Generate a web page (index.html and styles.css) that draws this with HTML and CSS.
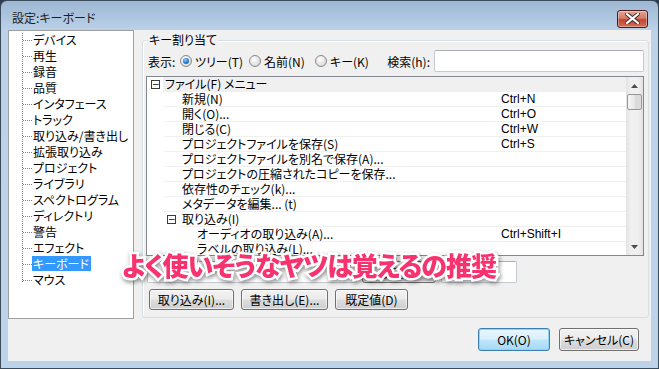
FILE: index.html
```html
<!DOCTYPE html>
<html lang="ja">
<head>
<meta charset="utf-8">
<title>設定:キーボード</title>
<link rel="stylesheet" href="styles.css">
</head>
<body>
<div class="window">
  <div class="titlebar">
    <span class="title">設定:キーボード</span>
    <div class="close">
      <svg width="15" height="11" viewBox="0 0 15 11"><path d="M2 1 L13 10 M13 1 L2 10" stroke="#3a2a2a" stroke-width="4" stroke-linecap="square"/><path d="M2 1 L13 10 M13 1 L2 10" stroke="#ffffff" stroke-width="2.2" stroke-linecap="square"/></svg>
    </div>
  </div>
  <div class="client">
    <div class="main">
      <div class="tree">
        <ul class="tree-list">
          <li>デバイス</li>
          <li>再生</li>
          <li>録音</li>
          <li>品質</li>
          <li>インタフェース</li>
          <li>トラック</li>
          <li>取り込み/書き出し</li>
          <li>拡張取り込み</li>
          <li>プロジェクト</li>
          <li>ライブラリ</li>
          <li>スペクトログラム</li>
          <li>ディレクトリ</li>
          <li>警告</li>
          <li>エフェクト</li>
          <li class="selected"><span>キーボード</span></li>
          <li>マウス</li>
        </ul>
      </div>
      <div class="group">
        <span class="legend">キー割り当て</span>
        <div class="viewrow">
          <span class="lbl-view">表示:</span>
          <span class="radio checked"></span><span class="rlabel r1">ツリー(T)</span>
          <span class="radio"></span><span class="rlabel r2">名前(N)</span>
          <span class="radio"></span><span class="rlabel r3">キー(K)</span>
          <span class="lbl-search">検索(h):</span>
          <span class="input search"></span>
        </div>
        <div class="list">
          <div class="rows">
            <div class="row lv0"><span class="gutter"><span class="box">−</span></span><span class="cell head"><span class="label">ファイル(F) メニュー</span><span class="key"></span></span></div>
            <div class="row lv1"><span class="gutter"></span><span class="cell"><span class="label">新規(N)</span><span class="key">Ctrl+N</span></span></div>
            <div class="row lv1"><span class="gutter"></span><span class="cell"><span class="label">開く(O)...</span><span class="key">Ctrl+O</span></span></div>
            <div class="row lv1"><span class="gutter"></span><span class="cell"><span class="label">閉じる(C)</span><span class="key">Ctrl+W</span></span></div>
            <div class="row lv1"><span class="gutter"></span><span class="cell"><span class="label">プロジェクトファイルを保存(S)</span><span class="key">Ctrl+S</span></span></div>
            <div class="row lv1"><span class="gutter"></span><span class="cell"><span class="label">プロジェクトファイルを別名で保存(A)...</span><span class="key"></span></span></div>
            <div class="row lv1"><span class="gutter"></span><span class="cell"><span class="label">プロジェクトの圧縮されたコピーを保存...</span><span class="key"></span></span></div>
            <div class="row lv1"><span class="gutter"></span><span class="cell"><span class="label">依存性のチェック(k)...</span><span class="key"></span></span></div>
            <div class="row lv1"><span class="gutter"></span><span class="cell"><span class="label">メタデータを編集... (t)</span><span class="key"></span></span></div>
            <div class="row lv1b"><span class="gutter"><span class="box">−</span></span><span class="cell"><span class="label">取り込み(I)</span><span class="key"></span></span></div>
            <div class="row lv2"><span class="gutter"></span><span class="cell"><span class="label">オーディオの取り込み(A)...</span><span class="key">Ctrl+Shift+I</span></span></div>
            <div class="row lv2"><span class="gutter"></span><span class="cell"><span class="label">ラベルの取り込み(L)...</span><span class="key"></span></span></div>
          </div>
          <div class="vscroll">
            <div class="sbtn"><svg width="7" height="4" viewBox="0 0 7 4"><path d="M0 4 L3.5 0 L7 4 Z" fill="#4d4d4d"/></svg></div>
            <div class="thumb"></div>
            <div class="track"></div>
            <div class="sbtn"><svg width="7" height="4" viewBox="0 0 7 4"><path d="M0 0 L3.5 4 L7 0 Z" fill="#4d4d4d"/></svg></div>
          </div>
        </div>
        <div class="editrow">
          <span class="input edit-key"></span>
          <span class="btn small">設定(S)</span>
          <span class="input edit-2"></span>
        </div>
        <div class="btnrow">
          <span class="btn b-import">取り込み(I)...</span>
          <span class="btn b-export">書き出し(E)...</span>
          <span class="btn b-default">既定値(D)</span>
        </div>
      </div>
    </div>
    <div class="footer">
      <span class="btn default b-ok">OK(O)</span>
      <span class="btn b-cancel">キャンセル(C)</span>
    </div>
  </div>
  <div class="overlay">よく使いそうなヤツは覚えるの推奨</div>
</div>
</body>
</html>
```

FILE: styles.css
```css
* { box-sizing: border-box; }
html, body { margin: 0; padding: 0; }
body {
  width: 659px;
  height: 369px;
  overflow: hidden;
  background: #2d3d4e;
  font-family: "Noto Sans CJK JP", "Liberation Sans", sans-serif;
  font-size: 12px;
  font-feature-settings: "palt";
  color: #000;
}
.window {
  position: relative;
  width: 659px;
  height: 369px;
  border: 1px solid #3a4b5c;
  border-radius: 7px 7px 0 0;
  background: linear-gradient(180deg, #9db7d3 0px, #a9c2dc 12px, #bcd2e9 30px, #bcd3ea 100%);
  display: flex;
  flex-direction: column;
  padding: 0 7px 7px 7px;
}
.titlebar {
  height: 29px;
  display: flex;
  align-items: center;
  justify-content: space-between;
  padding: 0 3px 0 4px;
}
.title {
  font-size: 12px;
  color: #1e1e1e;
  line-height: 14px;
  margin-top: 4px;
}
.close {
  width: 31px;
  height: 18px;
  margin-top: 6px;
  border: 1px solid #4a1b1d;
  border-radius: 3px;
  background: linear-gradient(180deg, #e3a598 0%, #d57a69 45%, #c2452f 55%, #d0705a 100%);
  display: flex;
  align-items: center;
  justify-content: center;
  box-shadow: inset 0 0 0 1px rgba(255,255,255,0.35);
}
.client {
  flex: 1;
  background: #f0f0f0;
  display: flex;
  flex-direction: column;
}
.main {
  height: 289px;
  display: flex;
}
.tree {
  width: 126px;
  height: 289px;
  background: #fff;
  border: 1px solid #a0a0a0;
}
.tree-list {
  list-style: none;
  margin: 0;
  padding: 1px 0 0 0;
  position: relative;
}
.tree-list::before {
  content: "";
  position: absolute;
  left: 13px;
  top: 2px;
  height: 249px;
  border-left: 1px dotted #7f7f7f;
}
.tree-list li {
  position: relative;
  height: 16px;
  line-height: 16px;
  padding-left: 24px;
  white-space: nowrap;
}
.tree-list li::before {
  content: "";
  position: absolute;
  left: 14px;
  top: 8px;
  width: 9px;
  border-top: 1px dotted #7f7f7f;
}
.tree-list li.selected span {
  display: inline-block;
  background: #3399ff;
  color: #fff;
  margin-left: -1px;
  padding: 0 2px 0 1px;
  height: 15px;
  line-height: 15px;
}
.group {
  position: relative;
  width: 507px;
  height: 278px;
  margin: 10px 0 0 8px;
  border: 1px solid #d5dfe5;
  border-radius: 3px;
  box-shadow: inset 1px 1px 0 #fff;
  padding: 9px 4px 0 3px;
}
.legend {
  position: absolute;
  top: -9px;
  left: 5px;
  background: #f0f0f0;
  padding: 0 1px;
  line-height: 16px;
}
.viewrow {
  height: 22px;
  display: flex;
  align-items: center;
  padding-left: 2px;
}
.lbl-view { width: 32px; flex: none; }
.radio {
  width: 12px;
  height: 12px;
  border-radius: 50%;
  border: 1px solid #8a8a8a;
  background: radial-gradient(circle at 40% 35%, #ffffff 0%, #e6e6e6 50%, #c9c9c9 100%);
  position: relative;
  flex: none;
}
.radio.checked::after {
  content: "";
  position: absolute;
  left: 2px;
  top: 2px;
  width: 6px;
  height: 6px;
  border-radius: 50%;
  background: radial-gradient(circle at 40% 35%, #8fd0ff 0%, #2c7cd1 50%, #144f8f 100%);
}
.rlabel { margin-left: 3px; flex: none; }
.r1 { width: 54px; }
.r2 { width: 51px; }
.r3 { width: 40px; }
.lbl-search { margin-left: auto; margin-right: 4px; }
.input {
  display: block;
  height: 22px;
  background: #fff;
  border: 1px solid #c5c9d1;
  border-top-color: #abadb3;
  border-radius: 2px;
}
.search { width: 210px; flex: none; }
.list {
  margin-top: 4px;
  height: 180px;
  width: 498px;
  border: 1px solid #828790;
  background: #fff;
  display: flex;
  overflow: hidden;
}
.rows {
  flex: 1;
  overflow: hidden;
}
.row {
  height: 15px;
  display: flex;
  white-space: nowrap;
}
.gutter {
  flex: none;
  position: relative;
}
.box {
  position: absolute;
  top: 3px;
  width: 9px;
  height: 9px;
  border: 1px solid #3b3b3b;
  font-size: 9px;
  line-height: 6px;
  text-align: center;
  color: #000;
  font-family: "DejaVu Sans", sans-serif;
}
.lv0 .gutter { width: 16px; }
.lv0 .box { left: 4px; }
.lv1 .gutter { width: 17px; }
.lv1b .gutter { width: 32px; }
.lv1b .box { left: 20px; }
.lv2 .gutter { width: 48px; }
.cell {
  flex: 1;
  display: flex;
  border-bottom: 1px solid #f0f0f0;
  line-height: 14px;
}
.cell.head {
  background: #f0f0f0;
}
.label {
  flex: 1;
  overflow: hidden;
}
.lv0 .label { padding-left: 2px; }
.lv1 .label { padding-left: 18px; }
.lv1b .label { padding-left: 3px; }
.lv2 .label { padding-left: 2px; }
.key {
  width: 125px;
  flex: none;
  font-family: "Liberation Sans", sans-serif;
}
.vscroll {
  width: 17px;
  flex: none;
  background: linear-gradient(90deg, #e3e3e3, #f0f0f0 30%, #f0f0f0 70%, #e3e3e3);
  display: flex;
  flex-direction: column;
}
.sbtn {
  height: 17px;
  display: flex;
  align-items: center;
  justify-content: center;
}
.thumb {
  height: 16px;
  margin: 0 1px;
  border: 1px solid #979797;
  border-radius: 2px;
  background: linear-gradient(90deg, #f6f6f6, #e6e6e6 50%, #d9d9d9 51%, #dcdcdc);
}
.track { flex: 1; }
.editrow {
  margin-top: 5px;
  height: 22px;
  display: flex;
  gap: 5px;
  padding-left: 1px;
}
.edit-key { width: 210px; }
.editrow .btn { width: 74px; height: 22px; }
.edit-2 { width: 76px; }
.btnrow {
  margin-top: 6px;
  display: flex;
  gap: 7px;
  padding-left: 3px;
}
.btn {
  display: flex;
  align-items: center;
  justify-content: center;
  height: 21px;
  border: 1px solid #707070;
  border-radius: 3px;
  background: linear-gradient(180deg, #f2f2f2 0%, #ebebeb 48%, #dddddd 52%, #cfcfcf 100%);
  box-shadow: inset 0 0 0 1px rgba(255,255,255,0.6);
  white-space: nowrap;
}
.b-import { width: 85px; }
.b-export { width: 87px; }
.b-default { width: 73px; }
.footer {
  display: flex;
  justify-content: flex-end;
  gap: 9px;
  padding: 9px 12px 0 0;
}
.footer .btn { height: 23px; }
.b-ok { width: 72px; }
.b-cancel { width: 80px; }
.btn.default {
  border-color: #3c7fb1;
  background: linear-gradient(180deg, #eaf6fd 0%, #d9f0fc 48%, #bee6fd 52%, #a7d9f5 100%);
  box-shadow: inset 0 0 0 1px #8fd3f5;
}
.overlay {
  position: absolute;
  left: 121px;
  top: 248px;
  font-size: 26px;
  line-height: 32px;
  font-weight: 900;
  color: #f7336f;
  white-space: nowrap;
  font-feature-settings: "palt";
  letter-spacing: -1px;
  -webkit-text-stroke: 5px #ffffff;
  paint-order: stroke fill;
  filter: drop-shadow(1px 2px 2px rgba(0,0,0,0.45));
}
```
